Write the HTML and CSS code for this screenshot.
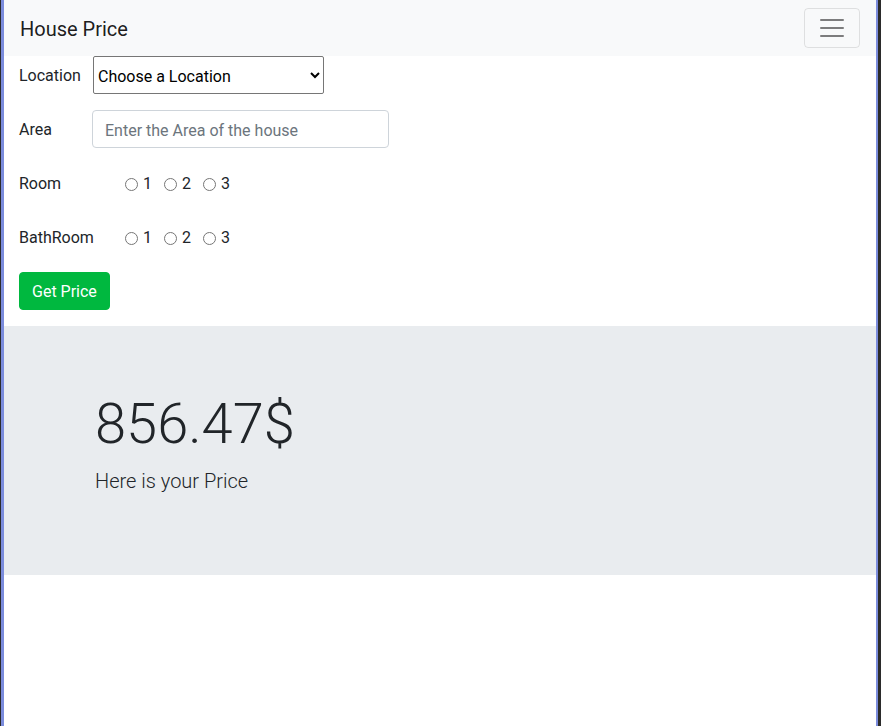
FILE: index.html
```html
<!DOCTYPE html>
<html lang="en">
<head>
<meta charset="utf-8">
<title>House Price</title>
<link rel="stylesheet" href="styles.css">
</head>
<body>
<div class="frame">
  <nav class="navbar">
    <span class="brand">House Price</span>
    <button class="toggler" type="button" aria-label="Toggle navigation">
      <svg class="toggler-icon" viewBox="0 0 30 30" width="30" height="30"><path stroke="rgba(0,0,0,0.5)" stroke-linecap="round" stroke-miterlimit="10" stroke-width="2" d="M4 7h22M4 15h22M4 23h22"/></svg>
    </button>
  </nav>
  <form class="form">
    <div class="row">
      <label class="lbl lbl-loc" for="loc">Location</label>
      <select id="loc" class="select"><option>Choose a Location</option></select>
    </div>
    <div class="row">
      <label class="lbl lbl-area" for="area">Area</label>
      <input id="area" class="input" type="text" placeholder="Enter the Area of the house">
    </div>
    <div class="row">
      <span class="lbl lbl-wide">Room</span>
      <div class="radios">
        <label class="opt"><input type="radio" name="room">1</label>
        <label class="opt"><input type="radio" name="room">2</label>
        <label class="opt"><input type="radio" name="room">3</label>
      </div>
    </div>
    <div class="row">
      <span class="lbl lbl-wide">BathRoom</span>
      <div class="radios">
        <label class="opt"><input type="radio" name="bath">1</label>
        <label class="opt"><input type="radio" name="bath">2</label>
        <label class="opt"><input type="radio" name="bath">3</label>
      </div>
    </div>
    <div class="row">
      <button class="btn" type="button">Get Price</button>
    </div>
  </form>
  <section class="jumbotron">
    <div class="container">
      <h1 class="display">856.47$</h1>
      <p class="lead">Here is your Price</p>
    </div>
  </section>
</div>
</body>
</html>
```
FILE: styles.css
```css
html, body {
  margin: 0;
  padding: 0;
  background: #2b2b2b;
}
body {
  font-family: Roboto, "Liberation Sans", sans-serif;
  font-size: 16px;
  line-height: 1.5;
  color: #212529;
}
.frame {
  margin: 0 3px 0 1px;
  border-left: 3px solid #7b8cdc;
  border-right: 2px solid #7b8cdc;
  background: #fff;
  min-height: 726px;
  box-sizing: border-box;
}
.navbar {
  display: flex;
  align-items: center;
  justify-content: space-between;
  padding: 8px 16px;
  background: #f8f9fa;
}
.brand {
  font-size: 20px;
  line-height: 30px;
  padding: 6px 0 4px;
  color: rgba(0,0,0,0.9);
}
.toggler {
  display: flex;
  padding: 4px 12px;
  line-height: 1;
  background: transparent;
  border: 1px solid rgba(0,0,0,0.1);
  border-radius: 4px;
  margin: 0;
}
.toggler-icon {
  display: block;
  width: 30px;
  height: 30px;
}
.form {
  padding: 0 15px;
  display: flex;
  flex-direction: column;
  gap: 16px;
}
.row {
  display: flex;
  align-items: center;
  height: 38px;
}
.lbl {
  flex: none;
  margin-top: 2px;
}
.lbl-loc { width: 74px; }
.lbl-area { width: 73px; }
.lbl-wide { width: 101px; }
.select {
  width: 231px;
  height: 38px;
  border: 1px solid #767676;
  border-radius: 2px;
  background: #fff;
  color: #000;
  font-family: Roboto, "Liberation Sans", sans-serif;
  font-size: 16px;
  padding: 2px 0 0;
  margin: 0;
}
.input {
  width: 297px;
  height: 38px;
  box-sizing: border-box;
  padding: 7px 12px 5px;
  border: 1px solid #ced4da;
  border-radius: 4px;
  font-family: Roboto, "Liberation Sans", sans-serif;
  font-size: 16px;
  color: #495057;
  margin: 0;
}
.input::placeholder {
  color: #6c757d;
}
.radios {
  display: flex;
  align-items: center;
  gap: 7px;
  margin-top: 2px;
}
.opt {
  display: flex;
  align-items: center;
}
.opt input {
  margin: 0 5px 0 5px;
  width: 13px;
  height: 13px;
}
.btn {
  height: 38px;
  padding: 7px 12px 5px;
  font-family: Roboto, "Liberation Sans", sans-serif;
  font-size: 16px;
  line-height: 24px;
  color: #fff;
  background: #00b83f;
  border: 1px solid #00b83f;
  border-radius: 4px;
}
.jumbotron {
  margin-top: 16px;
  background: #e9ecef;
  padding: 65px 0 63px;
}
.container {
  max-width: 720px;
  margin: 0 auto;
  padding: 0 15px;
  box-sizing: border-box;
}
.display {
  font-size: 56px;
  font-weight: 300;
  line-height: 1.2;
  margin: 0 0 8px;
}
.lead {
  font-size: 20px;
  font-weight: 300;
  line-height: 30px;
  margin: 0 0 16px;
}
```
